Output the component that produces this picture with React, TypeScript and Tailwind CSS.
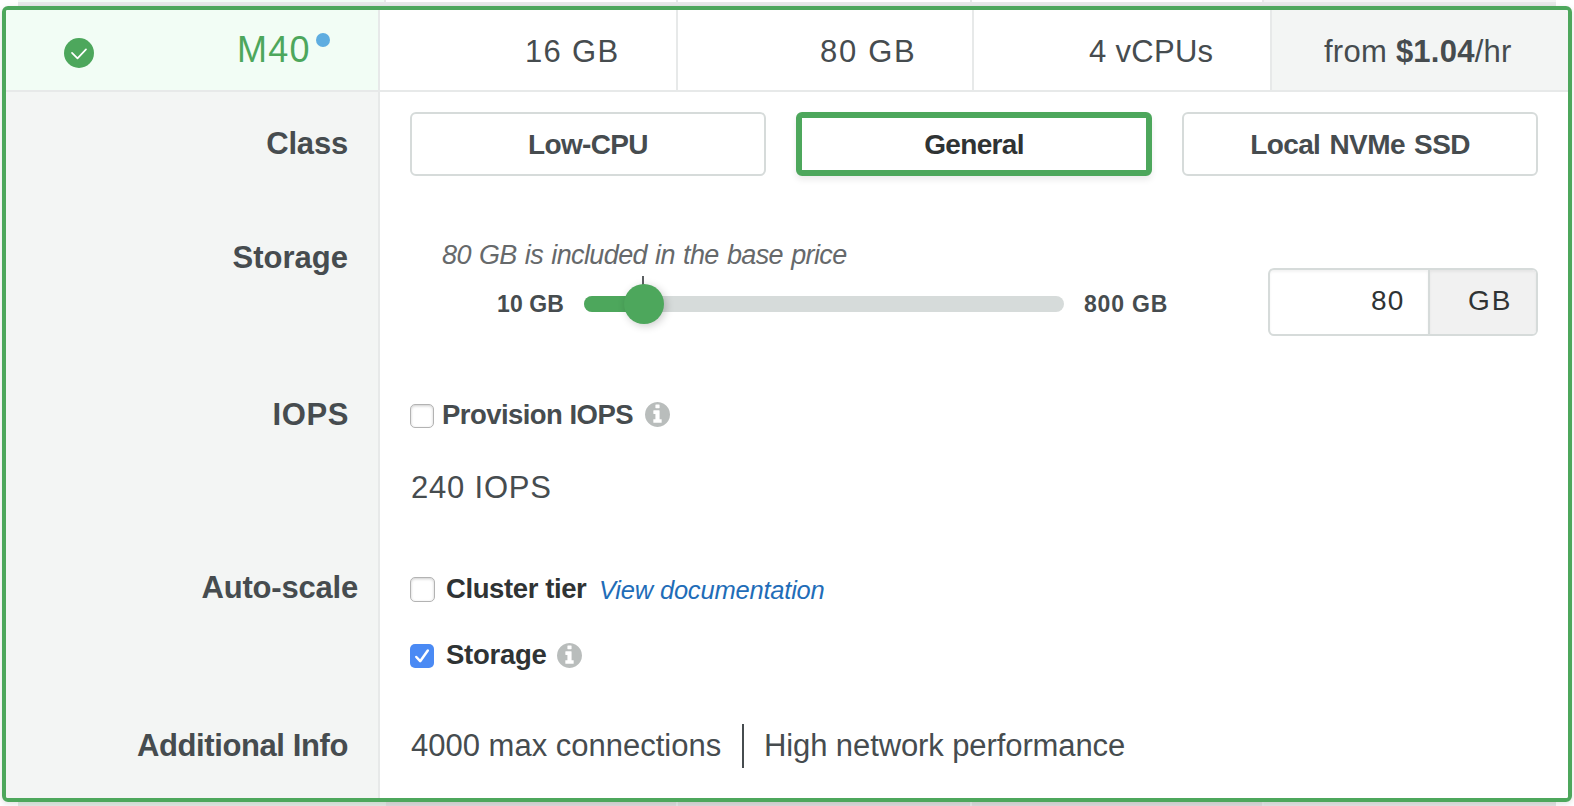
import type { ReactNode } from "react";

function InfoIcon({ className }: { className: string }) {
  return (
    <svg className={className} viewBox="0 128 1536 1536" fill="#b9bdbc" aria-hidden="true">
      <path d="M1024 1376v-160q0-14-9-23t-23-9h-96v-512q0-14-9-23t-23-9h-320q-14 0-23 9t-9 23v160q0 14 9 23t23 9h96v320h-96q-14 0-23 9t-9 23v160q0 14 9 23t23 9h448q14 0 23-9t9-23zm-128-896v-160q0-14-9-23t-23-9h-192q-14 0-23 9t-9 23v160q0 14 9 23t23 9h192q14 0 23-9t9-23zm640 416q0 209-103 385.5t-279.5 279.5-385.5 103-385.5-103-279.5-279.5-103-385.5 103-385.5 279.5-279.5 385.5-103 385.5 103 279.5 279.5 103 385.5z" />
    </svg>
  );
}

function Checkbox({ checked = false, size = "size-6" }: { checked?: boolean; size?: string }) {
  if (checked) {
    return (
      <span className="block size-6 shrink-0 rounded-[5px] bg-[#4a8af4]">
        <svg className="size-6" viewBox="0 0 24 24" fill="none" stroke="#fff" strokeWidth="2.5" strokeLinecap="round" strokeLinejoin="round" aria-hidden="true">
          <path d="M6.3 13 L10.2 17.2 L17.8 6.6" />
        </svg>
      </span>
    );
  }
  return (
    <span className={`block shrink-0 rounded-[5px] border border-[#b3b3b3] bg-white shadow-[inset_0_1px_3px_rgba(0,0,0,0.2)] ${size}`} />
  );
}

function Row({
  height,
  labelClass,
  label,
  contentClass,
  children,
}: {
  height: string;
  labelClass: string;
  label: string;
  contentClass: string;
  children: ReactNode;
}) {
  return (
    <div className={`flex ${height}`}>
      <div className={`w-[374px] shrink-0 border-r-2 border-[#e7e9e9] bg-[#f3f5f4] text-right text-[31px] leading-10 font-bold ${labelClass}`}>
        {label}
      </div>
      <div className={`min-w-0 flex-1 bg-white pr-[30px] ${contentClass}`}>{children}</div>
    </div>
  );
}

const buttonBase = "flex h-16 w-[356px] items-center justify-center rounded-[6px] bg-white pt-[2px] text-[28px] font-bold";

export default function App() {
  return (
    <div className="flex h-[806px] w-[1574px] flex-col overflow-hidden bg-white font-['Liberation_Sans',Arial,sans-serif] whitespace-nowrap text-[#464c4f]">
      <div className="mr-[18px] ml-[18px] flex h-[6px] shrink-0 border-b-4 border-[#e7e9e9]">
        <div className="w-[368px] border-r-2 border-[#e7e9e9] bg-[#f2fdf5]" />
        <div className="w-[292px] border-r-2 border-[#e7e9e9]" />
        <div className="w-[294px] border-r-2 border-[#e7e9e9]" />
        <div className="w-[292px] border-r-2 border-[#e7e9e9]" />
        <div className="flex-1 bg-[#f3f5f4]" />
      </div>

      <div className="z-10 mr-[2px] ml-[2px] flex h-[796px] shrink-0 flex-col overflow-hidden rounded-[6px] border-4 border-[#4da75c] shadow-[0_2px_6px_rgba(0,0,0,0.12)]">
        <div className="flex h-[82px] shrink-0 border-b-2 border-[#e7e9e9] bg-white text-[31px] leading-[84px]">
          <div className="flex w-[374px] shrink-0 border-r-2 border-[#e7e9e9] bg-[#f2fdf5] pl-[58px]">
            <svg className="mt-7 size-[30px]" viewBox="0 0 30 30" fill="none" aria-hidden="true">
              <circle cx="15" cy="15" r="15" fill="#4da75c" />
              <path d="M8 14.8 L13.5 20.4 L22 11.4" stroke="#fff" strokeWidth="1.7" strokeLinecap="round" strokeLinejoin="round" />
            </svg>
            <span className="ml-[143px] w-[73px] text-[36px] leading-[80px] tracking-[1.2px] text-[#4da75c]">M40</span>
            <span className="mt-[23px] ml-[6px] size-[14px] rounded-full bg-[#5fade0]" />
          </div>
          <div className="w-[298px] border-r-2 border-[#e7e9e9] pl-[145px] tracking-[1.3px]">16 GB</div>
          <div className="w-[296px] border-r-2 border-[#e7e9e9] pl-[142px] tracking-[1.7px]">80 GB</div>
          <div className="w-[298px] border-r-2 border-[#e7e9e9] pl-[115px] tracking-[0.3px]">4 vCPUs</div>
          <div className="flex-1 bg-[#f3f5f4] pl-[52px] tracking-[0.25px]">
            from <b>$1.04</b>/hr
          </div>
        </div>

        <Row height="h-[130px]" label="Class" labelClass="pt-8 pr-[30px] tracking-[-0.2px]" contentClass="flex gap-[30px] pt-5 pl-[30px]">
          <button className={`${buttonBase} border-2 border-[#d6dbda] tracking-[-0.65px]`}>Low-CPU</button>
          <button className={`${buttonBase} border-[6px] border-[#4da75c] tracking-[-0.65px] text-[#2f3334] shadow-[0_4px_6px_rgba(0,0,0,0.08)]`}>General</button>
          <button className={`${buttonBase} border-2 border-[#d6dbda] tracking-[-0.6px] [word-spacing:2px]`}>Local NVMe SSD</button>
        </Row>

        <Row height="h-[160px]" label="Storage" labelClass="pt-4 pr-[30px]" contentClass="flex justify-between pl-[30px]">
          <div className="w-[770px] pt-[17px]">
            <div className="pl-8 text-[27px] leading-8 tracking-[-0.6px] text-[#66696b] italic [word-spacing:1.2px]">80 GB is included in the base price</div>
            <div className="mt-[17px] flex h-8 items-center text-[23px] leading-8 font-bold">
              <span className="w-[174px] pl-[87px] tracking-[0.1px]">10 GB</span>
              <div className="relative h-4 w-[480px] rounded-full bg-[#d6dbda]">
                <div className="h-4 w-[60px] rounded-l-full bg-[#4da75c]" />
                <div className="absolute top-[-20px] left-[58px] h-3 w-[2px] bg-[#5b5f61]" />
                <div className="absolute top-[-12px] left-10 size-10 rounded-full bg-[#4da75c] shadow-[2px_2px_8px_rgba(0,0,0,0.2)]" />
              </div>
              <span className="pl-5 tracking-[0.8px]">800 GB</span>
            </div>
          </div>
          <div className="mt-[46px] flex h-[68px] w-[270px] overflow-hidden rounded-[6px] border-2 border-[#d6dbda] text-[28px] leading-[62px] text-[#2f3334]">
            <div className="w-[160px] border-r-2 border-[#d6dbda] pl-[101px] tracking-[1.3px] shadow-[inset_0_2px_3px_rgba(0,0,0,0.05)]">80</div>
            <div className="flex-1 bg-[#f1f1f1] pl-[38px] tracking-[2px] shadow-[inset_0_2px_3px_rgba(0,0,0,0.05)]">GB</div>
          </div>
        </Row>

        <Row height="h-[160px]" label="IOPS" labelClass="pt-[13px] pr-[29px] tracking-[0.6px]" contentClass="pt-[22px] pl-[30px]">
          <div className="flex h-6 items-start">
            <Checkbox />
            <span className="w-[211px] pl-[8px] text-[27.5px] leading-[21px] font-bold tracking-[-0.55px]">Provision IOPS</span>
            <InfoIcon className="-mt-0.5 size-[25px]" />
          </div>
          <div className="mt-10 pl-px text-[31px] leading-10 tracking-[0.8px]">240 IOPS</div>
        </Row>

        <Row height="h-[160px]" label="Auto-scale" labelClass="pt-[26px] pr-[20px] tracking-[-0.2px]" contentClass="pt-[35px] pl-[30px]">
          <div className="flex h-6 items-start text-[#2f3334]">
            <Checkbox size="size-[25px]" />
            <span className="w-[164px] pl-[11px] text-[27.5px] leading-[23px] font-bold tracking-[-0.4px]">Cluster tier</span>
            <a className="text-[25.5px] leading-[27px] tracking-[-0.2px] text-[#1f6db8] italic">View documentation</a>
          </div>
          <div className="mt-[43px] flex h-6 items-start text-[#2f3334]">
            <Checkbox checked />
            <span className="w-[123px] pl-[12px] text-[27.5px] leading-[21px] font-bold tracking-[-0.25px]">Storage</span>
            <InfoIcon className="-mt-px size-[25px]" />
          </div>
        </Row>

        <Row height="h-[96px]" label="Additional Info" labelClass="pt-6 pr-[30px] tracking-[-0.4px]" contentClass="flex pt-[22px] pl-[31px] text-[31px] leading-11">
          <span className="w-[331px]">4000 max connections</span>
          <span className="mr-5 h-11 w-[2px] bg-[#464c4f]" />
          <span className="tracking-[-0.1px]">High network performance</span>
        </Row>
      </div>

      <div className="mr-[18px] ml-[18px] flex h-1 shrink-0">
        <div className="w-[368px] bg-[#e2ede5]" />
        <div className="w-[292px] border-r-2 border-[#e7e9e9] bg-[#dddddd]" />
        <div className="w-[294px] border-r-2 border-[#e7e9e9] bg-[#dddddd]" />
        <div className="w-[292px] border-r-2 border-[#e7e9e9] bg-[#dddddd]" />
        <div className="flex-1 bg-[#e4e6e5]" />
      </div>
    </div>
  );
}
